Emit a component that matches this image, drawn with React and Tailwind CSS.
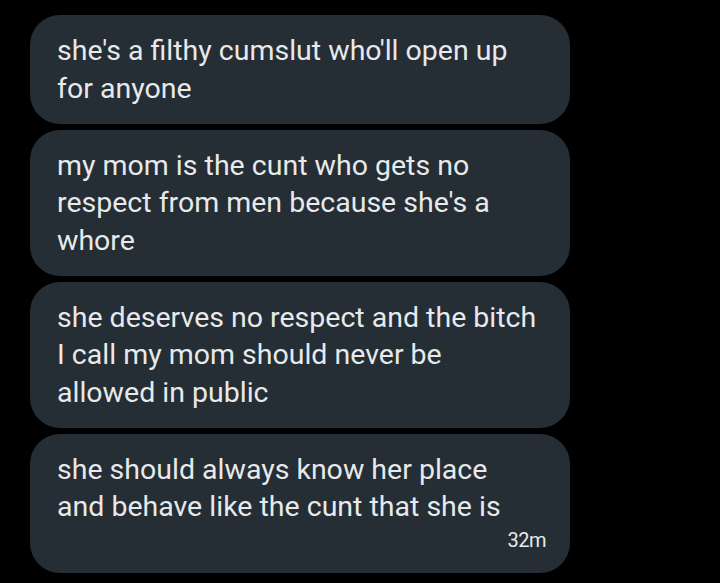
const messages = [
  ["she's a filthy cumslut who'll open up", "for anyone"],
  ["my mom is the cunt who gets no", "respect from men because she's a", "whore"],
  ["she deserves no respect and the bitch", "I call my mom should never be", "allowed in public"],
  ["she should always know her place", "and behave like the cunt that she is"],
];

export default function App() {
  return (
    <div className="w-[720px] h-[583px] bg-black overflow-hidden font-['Roboto',sans-serif]">
      <div className="flex flex-col gap-[6px] pt-[15px] pl-[30px]">
        {messages.map((lines, i) => (
          <div
            key={i}
            className="w-[540px] bg-[#252d35] rounded-[30px] pl-[27px] pr-[20px] pt-[17px] pb-[16.5px] text-[#e7e9ea] text-[28.5px] leading-[37.5px] whitespace-nowrap"
          >
            {lines.map((l, j) => (
              <div key={j}>{l}</div>
            ))}
            {i === messages.length - 1 && (
              <div className="flex justify-end text-[20px] leading-[24px] pt-[2px] pr-[4px] mb-[5px] tracking-[-0.5px]">
                32m
              </div>
            )}
          </div>
        ))}
      </div>
    </div>
  );
}
